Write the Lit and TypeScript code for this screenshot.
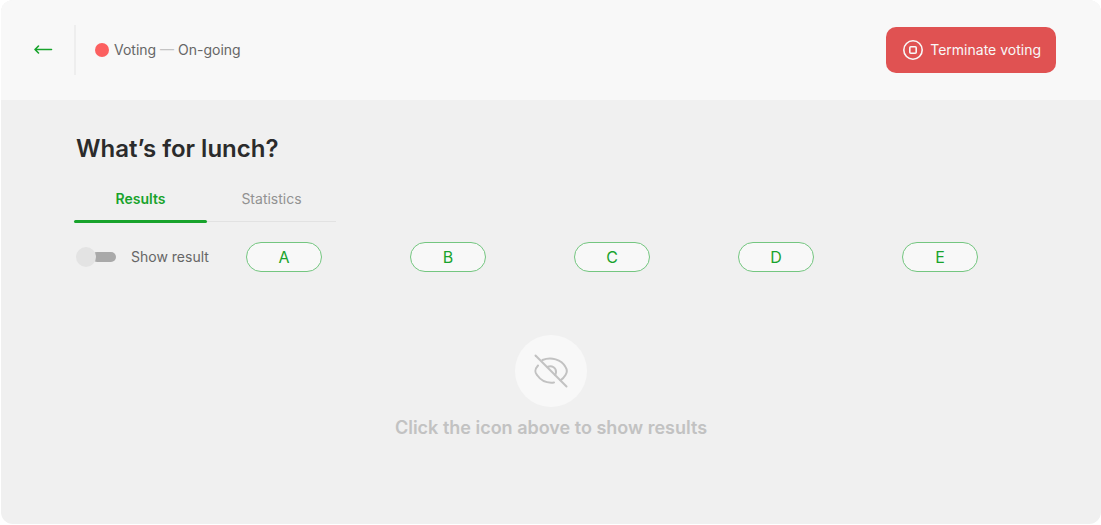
import { LitElement, html, css } from "lit";
import { customElement, state } from "lit/decorators.js";

const OPTIONS = ["A", "B", "C", "D", "E"];

@customElement("app-root")
export class AppRoot extends LitElement {
  static styles = css`
    :host {
      display: flex;
      box-sizing: border-box;
      min-height: 100vh;
      padding: 0 0 1px 1px;
      background: #fff;
      font-family: Inter, "Liberation Sans", sans-serif;
      font-size: 14px;
      line-height: 20px;
      color: #666;
    }
    * {
      box-sizing: border-box;
    }
    button {
      font: inherit;
      cursor: pointer;
    }
    .panel {
      flex: 1;
      border-radius: 12px;
      overflow: hidden;
      background: #f0f0f0;
    }
    .header {
      display: flex;
      align-items: center;
      height: 100px;
      padding: 0 45px 0 32px;
      background: #f8f8f8;
    }
    .back {
      display: flex;
      color: #18a32c;
    }
    .divider {
      width: 2px;
      height: 50px;
      margin: 0 19px 0 21px;
      background: #eee;
    }
    .status {
      display: flex;
      align-items: center;
      gap: 5px;
      flex: 1;
    }
    .dot {
      width: 14px;
      height: 14px;
      border-radius: 50%;
      background: #fc6060;
    }
    .dash {
      color: #c4c4c4;
    }
    .terminate {
      display: flex;
      align-items: center;
      gap: 5px;
      height: 46px;
      padding: 0 15px;
      border: 0;
      border-radius: 10px;
      background: #e05252;
      color: #f8f8f8;
    }
    .body {
      padding: 33px 35px 32px 73px;
    }
    .title {
      margin: 0 0 22px 2px;
      font-size: 24px;
      line-height: 32px;
      font-weight: 600;
      color: #2b2b2b;
    }
    .tabs {
      display: grid;
      grid-template-columns: 133px 129px;
      width: 262px;
      height: 35px;
      border-bottom: 1px solid #e2e2e2;
    }
    .tab {
      height: 36px;
      padding: 0 0 9px;
      border: 0;
      border-bottom: 3px solid transparent;
      background: none;
      color: #929292;
    }
    .tab.active {
      position: relative;
      font-weight: 600;
      color: #18a32c;
    }
    .tab.active::after {
      content: "";
      position: absolute;
      left: 0;
      right: 0;
      bottom: -3px;
      height: 3px;
      border-radius: 2px;
      background: #18a32c;
    }
    .controls {
      display: flex;
      align-items: center;
      margin-top: 20px;
    }
    .toggle {
      display: flex;
      align-items: center;
      gap: 15px;
      width: 172px;
      padding-left: 2px;
      cursor: pointer;
    }
    .switch {
      appearance: none;
      display: flex;
      align-items: center;
      width: 40px;
      height: 20px;
      margin: 0;
      border-radius: 10px;
      cursor: pointer;
    }
    .switch::before {
      content: "";
      z-index: 1;
      width: 20px;
      height: 20px;
      border-radius: 50%;
      background: #e3e3e3;
    }
    .switch::after {
      content: "";
      width: 24px;
      height: 10px;
      margin: 0 0 0 -4px;
      border-radius: 5px;
      background: #a9a9a9;
    }
    .switch:checked {
      flex-direction: row-reverse;
    }
    .switch:checked::after {
      margin: 0 -4px 0 0;
      background: #18a32c;
    }
    .options {
      display: grid;
      grid-template-columns: repeat(5, 1fr);
      flex: 1;
    }
    .option {
      justify-self: start;
      width: 76px;
      height: 30px;
      padding: 0;
      border: 1px solid #74c680;
      border-radius: 15px;
      background: #f8f8f8;
      font-size: 16px;
      color: #18a32c;
    }
    .hint {
      display: flex;
      flex-direction: column;
      align-items: center;
      gap: 9px;
      margin: 63px 38px 0 0;
    }
    .reveal {
      display: flex;
      align-items: center;
      justify-content: center;
      width: 72px;
      height: 72px;
      padding: 0;
      border: 0;
      border-radius: 50%;
      background: #f8f8f8;
      color: #c2c2c2;
    }
    .message {
      margin: 0;
      font-size: 18px;
      line-height: 24px;
      font-weight: 600;
      color: #c2c2c2;
    }
  `;

  @state() private tab = "Results";
  @state() private shown = false;

  render() {
    return html`
      <main class="panel">
        <header class="header">
          <a class="back" href="#" aria-label="Back">
            <svg width="20" height="12" viewBox="0 0 20 12" fill="none" stroke="currentColor" stroke-width="1.6" stroke-linecap="round" stroke-linejoin="round">
              <path d="M18.500 5.500H2M5.500 2L2 5.500L5.500 9" />
            </svg>
          </a>
          <span class="divider"></span>
          <div class="status">
            <span class="dot"></span>
            <span>Voting <span class="dash">—</span> On-going</span>
          </div>
          <button class="terminate" type="button">
            <svg width="24" height="24" viewBox="0 0 24 24" fill="none" stroke="currentColor" stroke-width="1.6">
              <circle cx="12" cy="12" r="9.2" />
              <rect x="8.800" y="8.800" width="6.400" height="6.400" rx="1" />
            </svg>
            Terminate voting
          </button>
        </header>
        <section class="body">
          <h1 class="title">What’s for lunch?</h1>
          <div class="tabs" role="tablist">
            ${["Results", "Statistics"].map(
              (name) => html`<button
                class="tab ${this.tab === name ? "active" : ""}"
                type="button"
                role="tab"
                aria-selected=${this.tab === name}
                @click=${() => (this.tab = name)}
              >${name}</button>`
            )}
          </div>
          <div class="controls">
            <label class="toggle" for="show">
              <input
                id="show"
                class="switch"
                type="checkbox"
                role="switch"
                .checked=${this.shown}
                @change=${() => (this.shown = !this.shown)}
              />
              Show result
            </label>
            <div class="options">
              ${OPTIONS.map((o) => html`<button class="option" type="button">${o}</button>`)}
            </div>
          </div>
          <div class="hint">
            <button class="reveal" type="button" aria-label="Show results" @click=${() => (this.shown = true)}>
              <svg width="36" height="36" viewBox="0 0 36 36" fill="none" stroke="currentColor" stroke-width="2" stroke-linecap="round">
                <path d="M2.500 2.500L33.500 33.500" />
                <path d="M5 12.500C1.500 16.500 1.500 19 4 22C7.500 27 13.500 30.500 21 29.500" />
                <path d="M9.500 7C18 3.500 28.500 6.500 32.500 14C34.500 17 34.500 19 32.500 22C31 24.500 29.500 26 27.500 27.300" />
                <path d="M14.500 13.800C19 11.800 23.500 15 23 19.500C22.900 20.500 22.600 21.300 22 22" />
              </svg>
            </button>
            <p class="message">Click the icon above to show results</p>
          </div>
        </section>
      </main>
    `;
  }
}
